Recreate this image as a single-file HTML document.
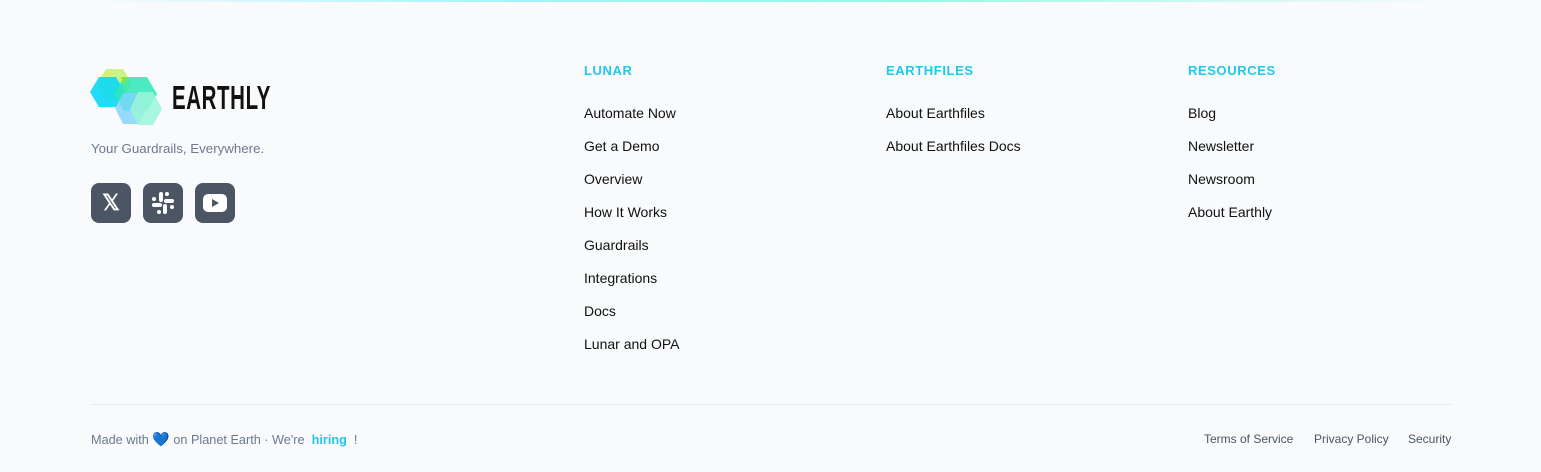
<!DOCTYPE html>
<html><head><style>
*{margin:0;padding:0;box-sizing:border-box}
body{width:1541px;height:472px;background:#f8fafc;font-family:"Liberation Sans",sans-serif;position:relative;overflow:hidden}
.topline{position:absolute;top:0;left:90px;width:1360px;height:2px;background:linear-gradient(90deg,rgba(103,232,249,0),#a5f3fc 30%,#99f6e4 60%,rgba(103,232,249,0))}
.tag{position:absolute;left:91px;top:141px;font-size:13.3px;color:#6b7a90}
.soc{position:absolute;top:183px;width:40px;height:40px;border-radius:8px;background:#4b5563;display:flex;align-items:center;justify-content:center}
.col{position:absolute;top:63px}
.col h4{font-size:13px;font-weight:bold;color:#22c7ee;letter-spacing:.6px;height:42px}
.col a{display:block;font-size:14px;color:#111;text-decoration:none;height:33px}
.hr{position:absolute;left:91px;top:404px;width:1360px;height:1px;background:#e2e8f0}
.bl{position:absolute;top:431px;font-size:12.7px;color:#6b7a90}
.br{position:absolute;top:432px;font-size:12px;color:#4b5563}
</style></head><body>
<div class="topline"></div>
<svg style="position:absolute;left:90px;top:68px" width="75" height="60" viewBox="0 0 75 60">
<polygon points="16,1 33,1 42,16 33,31 16,31 7,16" fill="#bef264" opacity=".8"/>
<polygon points="9,9 26,9 35,24 26,39 9,39 0,24" fill="#0ad8f5" opacity=".9"/>
<polygon points="34,9 57,9 67,26 57,43 34,43 24,26" fill="#2ee6b8" opacity=".85"/>
<polygon points="33,25 49,25 57,40 49,56 33,56 25,40" fill="#7dd3fc" opacity=".8"/>
<polygon points="48,24 63,24 72,41 63,57 48,57 40,41" fill="#99f6d8" opacity=".85"/>
<polygon points="31,9 38,9 34,17" fill="#84e63c"/>
</svg>
<div style="position:absolute;left:172px;top:79px;font-size:33px;font-weight:bold;letter-spacing:1px;transform:scaleX(.62);transform-origin:left;color:#111">EARTHLY</div>
<div class="tag">Your Guardrails, Everywhere.</div>
<div class="soc" style="left:91px"><span style="color:#fff;font-size:22px;font-weight:bold">𝕏</span></div>
<div class="soc" style="left:143px"><svg width="24" height="24" viewBox="0 0 24 24" fill="#fff"><rect x="8" y="1" width="4" height="10" rx="2"/><rect x="14" y="1" width="4" height="4" rx="2"/><rect x="13" y="8" width="10" height="4" rx="2"/><rect x="19" y="14" width="4" height="4" rx="2"/><rect x="12" y="13" width="4" height="10" rx="2"/><rect x="6" y="19" width="4" height="4" rx="2"/><rect x="1" y="12" width="10" height="4" rx="2"/><rect x="1" y="6" width="4" height="4" rx="2"/></svg></div>
<div class="soc" style="left:195px"><svg width="24" height="18" viewBox="0 0 24 18"><rect x="0" y="0" width="24" height="18" rx="5" fill="#fff"/><polygon points="9,5 9,13 16,9" fill="#4b5563"/></svg></div>
<div class="col" style="left:584px"><h4>LUNAR</h4><a>Automate Now</a><a>Get a Demo</a><a>Overview</a><a>How It Works</a><a>Guardrails</a><a>Integrations</a><a>Docs</a><a>Lunar and OPA</a></div>
<div class="col" style="left:886px"><h4>EARTHFILES</h4><a>About Earthfiles</a><a>About Earthfiles Docs</a></div>
<div class="col" style="left:1188px"><h4>RESOURCES</h4><a>Blog</a><a>Newsletter</a><a>Newsroom</a><a>About Earthly</a></div>
<div class="hr"></div>
<div class="bl" style="left:91px">Made with <span style="color:#1d74d8;font-size:14px">💙</span> on Planet Earth · We're &nbsp;<span style="color:#22c7ee;font-weight:bold">hiring</span> &nbsp;!</div>
<div class="br" style="left:1204px">Terms of Service</div>
<div class="br" style="left:1314px">Privacy Policy</div>
<div class="br" style="left:1408px">Security</div>
</body></html>
